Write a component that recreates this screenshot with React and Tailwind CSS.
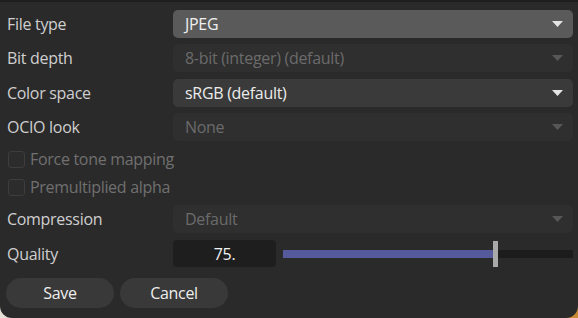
import React from 'react';

const font = { fontFamily: '"Open Sans", "Noto Sans", sans-serif' };

const Arrow = ({ disabled }) => (
  <svg width="11" height="6" viewBox="0 0 11 6" className="shrink-0">
    <path d="M0 0 L11 0 L5.5 6 Z" fill={disabled ? '#575757' : '#e4e4e4'} />
  </svg>
);

const Dropdown = ({ value, disabled, hover }) => (
  <div
    className={`flex-1 h-[28px] rounded-[5px] flex items-center justify-between pl-[12px] pr-[10px] ${
      hover ? 'bg-[#5a5a5a] text-[#f0f0f0]' : disabled ? 'bg-[#2f2f2f] text-[#6b6b6b]' : 'bg-[#3a3a3a] text-[#ececec]'
    }`}
  >
    <span>{value}</span>
    <Arrow disabled={disabled} />
  </div>
);

const Row = ({ label, children, className = '' }) => (
  <div className={`flex items-center ${className}`}>
    <div className="w-[173px] pl-[7px] text-[#cfcfcf]">{label}</div>
    {children}
  </div>
);

const Check = ({ label, className = '' }) => (
  <div className={`flex items-center pl-[8px] h-[18px] ${className}`}>
    <div className="w-[17px] h-[17px] rounded-[3px] border border-[#3d3d3d] bg-[#2c2c2c]" />
    <span className="ml-[5px] text-[#707070]">{label}</span>
  </div>
);

export default function App() {
  return (
    <div className="w-[578px] h-[318px] bg-gradient-to-r from-[#e6e1d8] to-[#c98a35]" style={font}>
      <div className="w-full h-full bg-[#2a2a2a] rounded-b-[12px] border-t-2 border-[#1e1e1e] text-[16px] tracking-[-0.3px] flex flex-col pr-[5px] pt-[8px]">
        <Row label="File type">
          <Dropdown value="JPEG" hover />
        </Row>
        <Row label="Bit depth" className="mt-[6px]">
          <Dropdown value="8-bit (integer) (default)" disabled />
        </Row>
        <Row label="Color space" className="mt-[7px]">
          <Dropdown value="sRGB (default)" />
        </Row>
        <Row label="OCIO look" className="mt-[6px]">
          <Dropdown value="None" disabled />
        </Row>
        <Check label="Force tone mapping" className="mt-[9px]" />
        <Check label="Premultiplied alpha" className="mt-[10px]" />
        <Row label="Compression" className="mt-[9px]">
          <Dropdown value="Default" disabled />
        </Row>
        <Row label="Quality" className="mt-[7px]">
          <div className="w-[103px] h-[27px] rounded-[4px] bg-[#1e1e1e] flex items-center justify-center text-[#f2f2f2]">
            75.
          </div>
          <div className="flex-1 ml-[7px] relative h-[26px] flex items-center">
            <div className="w-full h-[8px] bg-[#1c1c1c] flex">
              <div className="w-[210px] h-full bg-[#555a9c]" />
            </div>
            <div className="absolute left-[210px] top-0 w-[5px] h-[26px] bg-[#a9a9a9]" />
          </div>
        </Row>
        <div className="flex gap-[6px] pl-[6px] mt-[11px]">
          <button className="w-[108px] h-[30px] rounded-full bg-[#393939] text-[#eeeeee]">Save</button>
          <button className="w-[108px] h-[30px] rounded-full bg-[#393939] text-[#eeeeee]">Cancel</button>
        </div>
      </div>
    </div>
  );
}
